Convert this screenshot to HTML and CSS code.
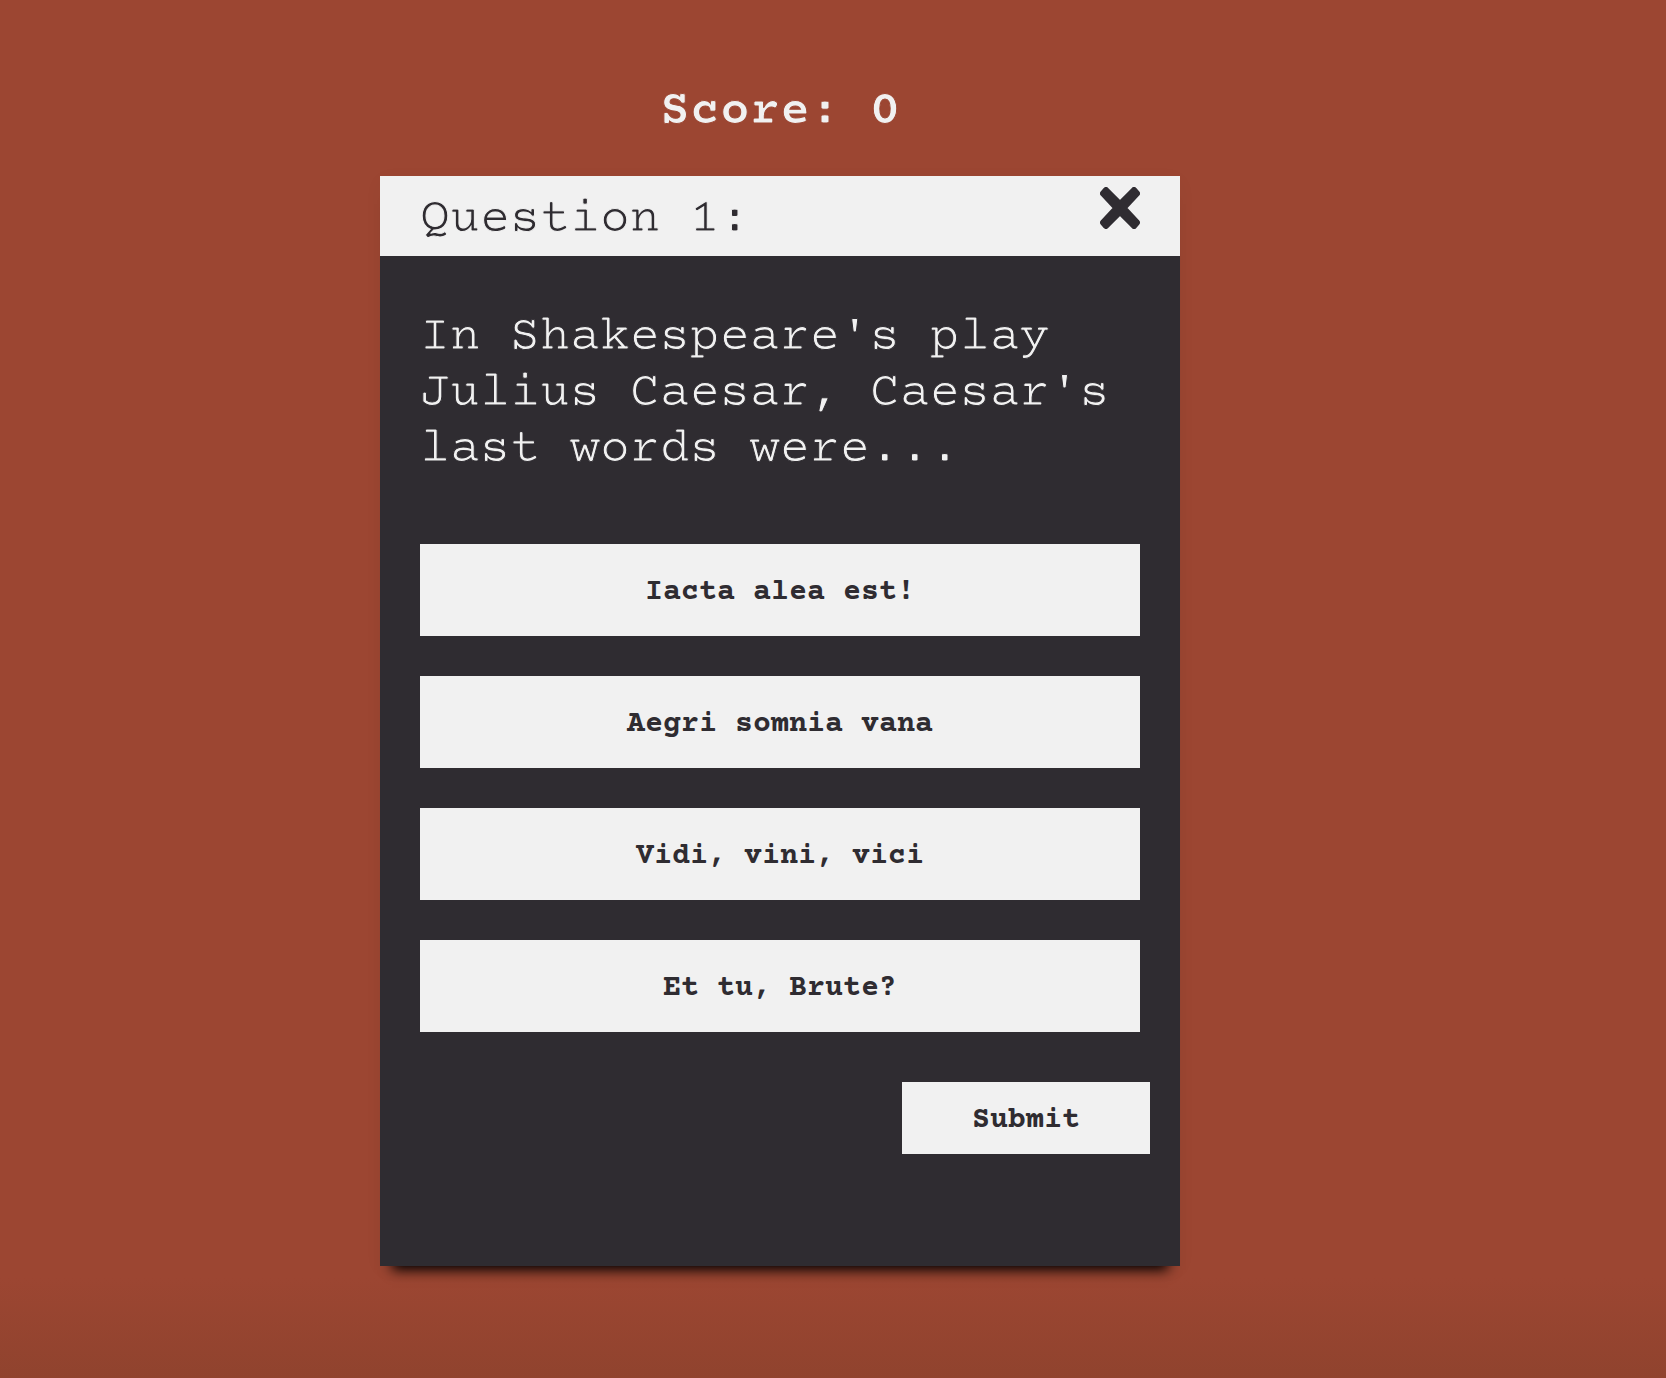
FILE: index.html
```html
<!DOCTYPE html>
<html lang="en">
<head>
  <meta charset="utf-8">
  <meta name="viewport" content="width=device-width, initial-scale=1">
  <title>Quiz</title>
  <link rel="stylesheet" href="styles.css">
</head>
<body>
  <main class="quiz">
    <h1 class="score">Score: 0</h1>
    <section class="card">
      <header class="card-header">
        <h2 class="card-title">Question 1:</h2>
        <button class="close" type="button" aria-label="Close">
          <svg class="close-icon" viewBox="0 0 40 42" aria-hidden="true">
            <path d="M6 3 20 17 34 3 37 6.500 23.500 21 37 35.500 34 39 20 25 6 39 3 35.500 16.500 21 3 6.500Z" />
          </svg>
        </button>
      </header>
      <form class="card-body">
        <p class="question">In Shakespeare's play Julius Caesar, Caesar's last words were...</p>
        <div class="answers">
          <button class="answer" type="button">Iacta alea est!</button>
          <button class="answer" type="button">Aegri somnia vana</button>
          <button class="answer" type="button">Vidi, vini, vici</button>
          <button class="answer" type="button">Et tu, Brute?</button>
        </div>
        <button class="submit" type="button">Submit</button>
      </form>
    </section>
  </main>
</body>
</html>
```
FILE: styles.css
```css
* {
  box-sizing: border-box;
}

body {
  margin: 0;
  min-height: 100vh;
  padding: 84px 106px 112px 0;
  background: linear-gradient(to top, #90432e, #9c4632 100px) #9c4632;
  color: #f1f1f1;
  font-family: "Courier Prime", "Liberation Mono", monospace;
  font-size: 50px;
  line-height: 56px;
}

h1,
h2,
p {
  margin: 0;
  font-size: 50px;
  font-weight: 400;
}

button {
  border: 0;
  padding: 0;
  background: #f1f1f1;
  color: #2f2c31;
  font-family: inherit;
  font-size: 30px;
  font-weight: 700;
  line-height: 36px;
  cursor: pointer;
}

.quiz {
  max-width: 800px;
  margin: 0 auto;
}

/* Outlines on the large text take the colour of the surface behind, for a lighter letter. */
.score {
  margin-bottom: 36px;
  font-weight: 700;
  text-align: center;
  -webkit-text-stroke: 1px #9c4632;
}

.card {
  background: #2f2c31;
  box-shadow: 0 16px 12px -12px #000, 0 4px 20px rgba(0, 0, 0, 0.03);
}

.card-header {
  display: flex;
  justify-content: space-between;
  align-items: flex-start;
  padding: 11px 40px 8px;
  background: #f1f1f1;
  color: #2f2c31;
}

.card-title {
  padding-top: 5px;
  -webkit-text-stroke: 1px #f1f1f1;
}

.close {
  display: flex;
}

.close-icon {
  width: 40px;
  height: 42px;
  fill: currentColor;
  stroke: currentColor;
  stroke-width: 6px;
  stroke-linejoin: round;
}

.card-body {
  display: flex;
  flex-direction: column;
  padding: 54px 40px 112px;
}

.question {
  margin-bottom: 66px;
  -webkit-text-stroke: 1px #2f2c31;
}

.answers {
  display: grid;
  gap: 40px;
}

.answer {
  padding: 31px 20px 25px;
}

.submit {
  align-self: flex-end;
  margin: 50px -10px 0 0;
  padding: 21px 70px 15px;
}
```
